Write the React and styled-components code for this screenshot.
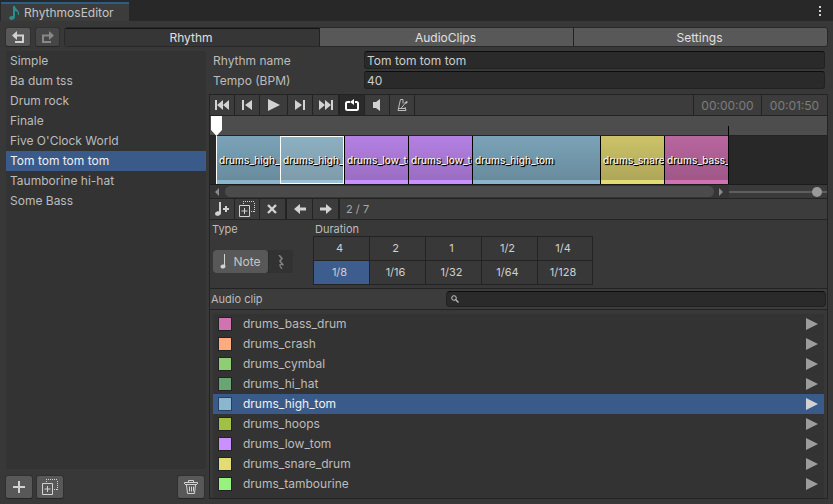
import React, { useState } from "react";
import styled, { createGlobalStyle, css } from "styled-components";

const color = {
  window: "#383838",
  strip: "#282828",
  line: "#232323",
  list: "#333333",
  toolbar: "#3c3c3c",
  button: "#585858",
  field: "#2a2a2a",
  select: "#3a5b8a",
  text: "#c4c4c4",
  icon: "#d2d2d2",
};

const GlobalStyle = createGlobalStyle`
  *, *::before, *::after { box-sizing: border-box; }
  body {
    margin: 0;
    background: ${color.window};
    color: ${color.text};
    font-family: Inter, "Liberation Sans", sans-serif;
    font-size: 12px;
  }
  button, input { font: inherit; color: inherit; margin: 0; }
  button { padding: 0; border: 0; background: none; }
  ul { list-style: none; margin: 0; padding: 0; }
  svg { display: block; flex: none; }
`;

const Window = styled.div`
  min-height: 100vh;
  display: flex;
  flex-direction: column;
  background: ${color.window};
`;

const TitleBar = styled.header`
  display: flex;
  justify-content: space-between;
  height: 21px;
  padding-left: 1px;
  background: ${color.strip};
`;

const WindowTab = styled.h1`
  display: flex;
  align-items: center;
  gap: 3px;
  width: 128px;
  margin: 2px 0 0;
  padding-left: 8px;
  border-top: 2px solid #2c5d87;
  background: #3c3c3c;
  font-size: 12px;
  font-weight: 400;
  line-height: 16px;
`;

const MenuButton = styled.button`
  display: grid;
  place-items: center;
  width: 12px;
  margin-right: 7px;
`;

const ModeBar = styled.nav`
  display: flex;
  gap: 4px;
  padding: 6px 5px 4px;
`;

const RaisedButton = styled.button`
  display: grid;
  place-items: center;
  width: ${(p) => p.$width}px;
  height: ${(p) => p.$height}px;
  border: 1px solid #303030;
  border-bottom-color: #242424;
  border-radius: 3px;
  background: ${color.button};
  &:disabled { background: #464646; }
`;

const Segments = styled.div`
  flex: 1;
  display: grid;
  grid-template-columns: repeat(3, 1fr);
  height: 20px;
  border: 1px solid #282828;
  border-radius: 3px;
  overflow: hidden;
`;

const Segment = styled.button`
  padding-right: 2px;
  color: #e0e0e0;
  background: ${(p) => (p.$active ? "#363636" : color.button)};
  box-shadow: ${(p) => (p.$active ? "inset 0 1px 0 #151515" : "none")};
  & + & { border-left: 1px solid #222; }
`;

const Workspace = styled.div`
  flex: 1;
  display: grid;
  grid-template-columns: 200px minmax(0, 1fr);
  gap: 3px;
  padding: 0 5px 5px 6px;
`;

const Sidebar = styled.aside`
  display: flex;
  flex-direction: column;
  gap: 6px;
`;

const RhythmList = styled.ul`
  flex: 1;
  background: ${color.list};
`;

const RhythmItem = styled.button`
  display: block;
  width: 100%;
  height: 20px;
  padding: 0 0 2px 4px;
  text-align: left;
  color: ${(p) => (p.$active ? "#f0f0f0" : "#bcbcbc")};
  background: ${(p) => (p.$active ? color.select : "transparent")};
`;

const SidebarActions = styled.div`
  display: flex;
  gap: 3px;
  margin: 0 1px 0 -1px;
`;

const Spacer = styled.span`
  flex: 1;
`;

const Main = styled.main`
  display: flex;
  flex-direction: column;
  min-width: 0;
`;

const Fields = styled.div`
  display: grid;
  gap: 2px;
  padding: 0 3px 5px 4px;
`;

const FieldRow = styled.div`
  display: grid;
  grid-template-columns: 151px minmax(0, 1fr);
  align-items: start;
  height: 18px;
`;

const FieldLabel = styled.label`
  color: #bcbcbc;
  line-height: 20px;
`;

const sunken = css`
  border: 1px solid #212121;
  border-top-color: #0d0d0d;
  border-radius: 3px;
  background: ${color.field};
`;

const TextField = styled.input`
  ${sunken}
  width: 100%;
  height: 18px;
  padding: 1px 2px 0;
  color: #cdcdcd;
`;

const Panel = styled.section`
  flex: 1;
  display: flex;
  flex-direction: column;
  border: 1px solid ${color.line};
`;

const Toolbar = styled.div`
  display: flex;
  height: 21px;
  border-bottom: 1px solid ${color.line};
  background: ${color.toolbar};
`;

const ToolButton = styled.button`
  display: grid;
  place-items: center;
  width: ${(p) => p.$width || 25}px;
  border-right: ${(p) => (p.$groupEnd ? 2 : 1)}px solid ${color.line};
  background: ${(p) => (p.$active ? "#2a2a2a" : "transparent")};
`;

const Clock = styled.output`
  width: ${(p) => p.$width}px;
  border-left: 1px solid ${color.line};
  color: #7d7d7d;
  line-height: 21px;
  text-align: center;
`;

const Position = styled.output`
  padding-left: 6px;
  font-size: 11px;
  line-height: 21px;
  color: #a8a8a8;
`;

const Timeline = styled.div`
  position: relative;
  border-bottom: 1px solid ${color.line};
  background: ${color.strip};
`;

const Ruler = styled.div`
  height: 20px;
  border-bottom: 1px solid ${color.line};
  background: #4d4d4d;
`;

const Track = styled.div`
  display: flex;
  height: 49px;
  padding-left: 6px;
  border-bottom: 1px solid #1c1c1c;
  overflow: hidden;
`;

const Clip = styled.button`
  flex: none;
  width: ${(p) => p.$beats * 64}px;
  height: 48px;
  padding-left: 2px;
  overflow: hidden;
  border-left: 1px solid ${(p) => (p.$first ? "#fff" : "#000")};
  background:
    linear-gradient(rgba(0, 0, 0, 0.11), rgba(0, 0, 0, 0.24)) 0 0 / 100% 44px no-repeat,
    ${(p) => p.$color};
  font-size: 10px;
  font-weight: 500;
  text-align: left;
  white-space: nowrap;
  color: #f2f2f2;
  text-shadow: 1px 1px 0 #000, 1px 1px 1px #000;
  ${(p) =>
    p.$selected &&
    css`
      border-left: 0;
      padding-left: 3px;
      outline: 1px solid #fff;
      outline-offset: -1px;
      background:
        linear-gradient(rgba(255, 255, 255, 0.14), rgba(255, 255, 255, 0.14)),
        linear-gradient(rgba(0, 0, 0, 0.11), rgba(0, 0, 0, 0.24)) 0 0 / 100% 44px no-repeat,
        ${p.$color};
    `}
`;

const EndMark = styled.span`
  position: absolute;
  left: 518px;
  top: 10px;
  width: 1px;
  height: 58px;
  background: #000;
`;

const Playhead = styled.svg`
  position: absolute;
  left: 1px;
  top: 0;
`;

const ScrollRow = styled.div`
  display: grid;
  grid-template-columns: minmax(0, 1fr) 98px;
  height: 13px;
  background: #3a3a3a;
`;

const ScrollBar = styled.div`
  display: flex;
  align-items: center;
  background: #353535;
`;

const ScrollArrow = styled.button`
  display: grid;
  place-items: center;
  width: 15px;
  height: 13px;
`;

const ScrollThumb = styled.div`
  flex: 1;
  height: 11px;
  border-radius: 6px;
  background: #4b4b4b;
`;

const ZoomSlider = styled.input`
  appearance: none;
  width: 100%;
  height: 13px;
  background: linear-gradient(#5e5e5e, #5e5e5e) 0 6px / 100% 2px no-repeat;
  &::-webkit-slider-thumb {
    appearance: none;
    width: 10px;
    height: 10px;
    margin-top: 1px;
    border-radius: 50%;
    background: #999;
  }
`;

const NoteSettings = styled.div`
  display: grid;
  grid-template-columns: 101px minmax(0, 1fr);
  height: 69px;
  padding: 1px 2px 0;
  border-bottom: 1px solid ${color.line};
`;

const Caption = styled.div`
  height: 15px;
  padding-left: ${(p) => p.$inset || 0}px;
  font-size: 11px;
  line-height: 16px;
  color: #bcbcbc;
`;

const TypeToggle = styled.div`
  display: inline-flex;
  width: 80px;
  height: 23px;
  margin: 14px 0 0 1px;
  border-radius: 3px;
  background: #323232;
  overflow: hidden;
`;

const TypeOption = styled.button`
  display: flex;
  align-items: center;
  justify-content: center;
  gap: 6px;
  width: ${(p) => (p.$active ? 55 : 25)}px;
  border-radius: 3px;
  background: ${(p) => (p.$active ? color.button : "transparent")};
  box-shadow: ${(p) => (p.$active ? "0 0 0 1px #2a2a2a" : "none")};
`;

const DurationGrid = styled.div`
  display: grid;
  grid-template-columns: repeat(4, 55px) 54px;
  grid-auto-rows: 23px;
  gap: 1px;
  width: max-content;
  border: 1px solid ${color.line};
  background: ${color.line};
`;

const DurationButton = styled.button`
  padding: 0 4px 2px 0;
  font-size: 11px;
  color: #d0d0d0;
  background: ${(p) => (p.$active ? "#3d5d8f" : color.window)};
`;

const SearchRow = styled.div`
  display: grid;
  grid-template-columns: 235px minmax(0, 1fr);
  align-items: center;
  height: 21px;
  padding: 0 1px;
  border-bottom: 1px solid ${color.line};
  background: ${color.toolbar};
`;

const SearchLabel = styled.label`
  font-size: 11px;
  color: #bcbcbc;
`;

const SearchBox = styled.div`
  ${sunken}
  display: flex;
  align-items: center;
  gap: 4px;
  height: 16px;
  padding-left: 4px;
  border-radius: 4px;
`;

const SearchInput = styled.input`
  flex: 1;
  min-width: 0;
  height: 14px;
  padding: 0;
  border: 0;
  outline: 0;
  background: transparent;
`;

const AudioList = styled.ul`
  flex: 1;
  margin: 4px 3px 0;
  background: ${color.list};
`;

const AudioRow = styled.li`
  display: flex;
  height: 20px;
  color: ${(p) => (p.$active ? "#f0f0f0" : "#bcbcbc")};
  background: ${(p) => (p.$active ? color.select : "transparent")};
`;

const AudioName = styled.button`
  flex: 1;
  display: flex;
  align-items: center;
  gap: 11px;
  padding-left: 5px;
  line-height: 20px;
  text-align: left;
`;

const Swatch = styled.span`
  width: 14px;
  height: 14px;
  border: 1px solid rgba(0, 0, 0, 0.3);
  background: ${(p) => p.$color};
  background-clip: padding-box;
`;

const PreviewButton = styled.button`
  display: grid;
  place-items: center;
  width: 25px;
  color: ${(p) => (p.$active ? "#d2d2d2" : "#9c9c9c")};
`;

const Icon = ({ w, h, children, fill = color.icon }) => (
  <svg width={w} height={h} viewBox={`0 0 ${w} ${h}`} fill={fill} aria-hidden="true">
    {children}
  </svg>
);

const TurnIcon = ({ flip, tint }) => (
  <Icon w={12} h={12} fill={tint}>
    <g transform={flip ? "matrix(-1 0 0 1 12 0)" : undefined}>
      <path d="M0 4.500 5 0v3.500h7V12H3v-2h7V5.500H5V9z" />
    </g>
  </Icon>
);

const DuplicateIcon = () => (
  <Icon w={16} h={16} fill="none">
    <path d="M.5 4.500h10v11H.5zM5.500 7v6M2.500 10h6" stroke={color.icon} />
    <path d="M4 .5h12M15.500 2v9M12 10.500h3M4.500 2v2" stroke={color.icon} strokeDasharray="1 1" />
  </Icon>
);

const transport = [
  ["To start", 25, <Icon w={14} h={10}><path d="M0 0h2v10H0zM8 0v10L2 5zM14 0v10L8 5z" /></Icon>],
  ["Previous note", 25, <Icon w={10} h={10}><path d="M0 0h2v10H0zM10 0v10L3 5z" /></Icon>],
  ["Play", 28, <Icon w={12} h={12}><path d="M0 0l12 6L0 12z" /></Icon>],
  ["Next note", 25, <Icon w={10} h={10}><path d="M8 0h2v10H8zM0 0v10l7-5z" /></Icon>],
  ["To end", 27, <Icon w={14} h={10}><path d="M12 0h2v10h-2zM6 0v10l6-5zM0 0v10l6-5z" /></Icon>],
];

const rhythms = [
  "Simple", "Ba dum tss", "Drum rock", "Finale", "Five O'Clock World",
  "Tom tom tom tom", "Taumborine hi-hat", "Some Bass",
];

const audioClips = {
  drums_bass_drum: "#d073b2",
  drums_crash: "#ffab7d",
  drums_cymbal: "#90cc74",
  drums_hi_hat: "#68a573",
  drums_high_tom: "#8ab7ce",
  drums_hoops: "#a0c143",
  drums_low_tom: "#ca90ff",
  drums_snare_drum: "#e5db75",
  drums_tambourine: "#96f27d",
};

const notes = [
  ["drums_high_tom", 1], ["drums_high_tom", 1], ["drums_low_tom", 1], ["drums_low_tom", 1],
  ["drums_high_tom", 2], ["drums_snare_drum", 1], ["drums_bass_drum", 1],
];

const durations = ["4", "2", "1", "1/2", "1/4", "1/8", "1/16", "1/32", "1/64", "1/128"];
const modes = ["Rhythm", "AudioClips", "Settings"];

export default function App() {
  const [mode, setMode] = useState("Rhythm");
  const [rhythm, setRhythm] = useState("Tom tom tom tom");
  const [note, setNote] = useState(1);
  const [duration, setDuration] = useState("1/8");
  const [clip, setClip] = useState("drums_high_tom");
  const [query, setQuery] = useState("");

  return (
    <Window>
      <GlobalStyle />
      <TitleBar>
        <WindowTab>
          <Icon w={12} h={14} fill="#2a8f8f">
            <path d="M4 0h2c0 3 5 4 4 9H9c0-3-1-4-3-4v6c0 2-2 3-4 3-3-1-2-4 1-4h1z" />
          </Icon>
          RhythmosEditor
        </WindowTab>
        <MenuButton aria-label="Window menu">
          <Icon w={2} h={10}><path d="M0 0h2v2H0zM0 4h2v2H0zM0 8h2v2H0z" /></Icon>
        </MenuButton>
      </TitleBar>

      <ModeBar>
        <RaisedButton $width={26} $height={20} aria-label="Undo"><TurnIcon tint={color.icon} /></RaisedButton>
        <RaisedButton $width={25} $height={20} aria-label="Redo" disabled><TurnIcon flip tint="#888" /></RaisedButton>
        <Segments>
          {modes.map((m) => (
            <Segment key={m} $active={m === mode} aria-pressed={m === mode} onClick={() => setMode(m)}>{m}</Segment>
          ))}
        </Segments>
      </ModeBar>

      <Workspace>
        <Sidebar>
          <RhythmList>
            {rhythms.map((r) => (
              <li key={r}>
                <RhythmItem $active={r === rhythm} onClick={() => setRhythm(r)}>{r}</RhythmItem>
              </li>
            ))}
          </RhythmList>
          <SidebarActions>
            <RaisedButton $width={28} $height={24} aria-label="Add rhythm">
              <Icon w={12} h={12}><path d="M5 0h2v5h5v2H7v5H5V7H0V5h5z" /></Icon>
            </RaisedButton>
            <RaisedButton $width={28} $height={24} aria-label="Duplicate rhythm"><DuplicateIcon /></RaisedButton>
            <Spacer />
            <RaisedButton $width={28} $height={24} aria-label="Delete rhythm">
              <Icon w={14} h={14} fill="none">
                <path d="M4.500 2V.5h5V2M.5 4V2.500h13V4M1 4.500h12M2.500 5l1 8.500h7l1-8.500M5.500 6.500v5M7.500 6.500v5M9.500 6.500v5" stroke={color.icon} />
              </Icon>
            </RaisedButton>
          </SidebarActions>
        </Sidebar>

        <Main>
          <Fields>
            <FieldRow>
              <FieldLabel htmlFor="name">Rhythm name</FieldLabel>
              <TextField id="name" defaultValue="Tom tom tom tom" />
            </FieldRow>
            <FieldRow>
              <FieldLabel htmlFor="tempo">Tempo (BPM)</FieldLabel>
              <TextField id="tempo" inputMode="numeric" defaultValue="40" />
            </FieldRow>
          </Fields>

          <Panel>
            <Toolbar>
              {transport.map(([label, width, icon], i) => (
                <ToolButton key={label} $width={width} $groupEnd={i === 4} aria-label={label}>{icon}</ToolButton>
              ))}
              <ToolButton $active aria-label="Loop" aria-pressed="true">
                <Icon w={14} h={12} fill="none">
                  <path d="M5 3H2.500Q1 3 1 4.500v5Q1 11 2.500 11h9q1.500 0 1.500-1.500v-5Q13 3 11.500 3H10" stroke="#fff" strokeWidth="2" />
                  <path d="M9 0v6L5 3z" fill="#fff" />
                </Icon>
              </ToolButton>
              <ToolButton aria-label="Mute">
                <Icon w={8} h={12}><path d="M0 3h3l4-3v12L3 9H0z" /></Icon>
              </ToolButton>
              <ToolButton aria-label="Metronome">
                <Icon w={11} h={12} fill="none">
                  <path d="M6 4.500V.5H3.500L1 11.500h8L8 8M2 9.500h6M4 9.500L9 3" stroke="#bdbdbd" />
                  <path d="M7.500 3.500l2-1.500 1.500 1-2 2z" fill="#bdbdbd" />
                </Icon>
              </ToolButton>
              <Spacer />
              <Clock $width={68}>00:00:00</Clock>
              <Clock $width={66}>00:01:50</Clock>
            </Toolbar>

            <Timeline>
              <Ruler />
              <Track>
                {notes.map(([name, beats], i) => (
                  <Clip
                    key={i}
                    $beats={beats}
                    $color={audioClips[name]}
                    $selected={i === note}
                    $first={i === 0}
                    onClick={() => setNote(i)}
                  >
                    {name}
                  </Clip>
                ))}
              </Track>
              <ScrollRow>
                <ScrollBar>
                  <ScrollArrow aria-label="Scroll left">
                    <Icon w={5} h={8} fill="#8a8a8a"><path d="M4 0v8L0 4z" /></Icon>
                  </ScrollArrow>
                  <ScrollThumb />
                  <ScrollArrow aria-label="Scroll right">
                    <Icon w={5} h={8} fill="#8a8a8a"><path d="M0 0v8l4-4z" /></Icon>
                  </ScrollArrow>
                </ScrollBar>
                <ZoomSlider type="range" min="0" max="100" defaultValue="94" aria-label="Timeline zoom" />
              </ScrollRow>
              <EndMark />
              <Playhead width="11" height="20" viewBox="0 0 11 20" fill="#fff" aria-hidden="true">
                <path d="M0 0h11v14l-5.500 6L0 14z" />
              </Playhead>
            </Timeline>

            <Toolbar>
              <ToolButton aria-label="Add note">
                <Icon w={15} h={14}>
                  <path d="M4 0h2v11H4z" />
                  <ellipse cx="3" cy="11.500" rx="3" ry="2.200" transform="rotate(-15 3 11.500)" />
                  <path d="M10 4h2v2h2v2h-2v2h-2V8H8V6h2z" />
                </Icon>
              </ToolButton>
              <ToolButton aria-label="Duplicate note"><DuplicateIcon /></ToolButton>
              <ToolButton $width={27} $groupEnd aria-label="Delete note">
                <Icon w={11} h={10} fill="none"><path d="M1 1l8 8M9 1L1 9" stroke={color.icon} strokeWidth="2.400" /></Icon>
              </ToolButton>
              <ToolButton $width={26} aria-label="Move left">
                <Icon w={12} h={10}><path d="M0 5l6-5v3.500h6v3H6V10z" /></Icon>
              </ToolButton>
              <ToolButton $width={27} $groupEnd aria-label="Move right">
                <Icon w={12} h={10}><path d="M12 5L6 0v3.500H0v3h6V10z" /></Icon>
              </ToolButton>
              <Position>{note + 1} / {notes.length}</Position>
            </Toolbar>

            <NoteSettings>
              <div>
                <Caption>Type</Caption>
                <TypeToggle>
                  <TypeOption $active aria-pressed="true">
                    <Icon w={7} h={15}>
                      <path d="M4 0h1v12H4z" />
                      <ellipse cx="3" cy="12.500" rx="2.500" ry="2" transform="rotate(-15 3 12.500)" />
                    </Icon>
                    Note
                  </TypeOption>
                  <TypeOption aria-label="Rest" aria-pressed="false">
                    <Icon w={6} h={14} fill="none">
                      <path d="M1 0L4 3.500 2 6l3 4" stroke="#808080" strokeWidth="1.600" />
                      <path d="M5.500 10Q-1 7.500 4 14" stroke="#808080" strokeWidth="1.200" />
                    </Icon>
                  </TypeOption>
                </TypeToggle>
              </div>
              <div>
                <Caption $inset={2}>Duration</Caption>
                <DurationGrid>
                  {durations.map((d) => (
                    <DurationButton key={d} $active={d === duration} aria-pressed={d === duration} onClick={() => setDuration(d)}>
                      {d}
                    </DurationButton>
                  ))}
                </DurationGrid>
              </div>
            </NoteSettings>

            <SearchRow>
              <SearchLabel htmlFor="search">Audio clip</SearchLabel>
              <SearchBox>
                <Icon w={8} h={8} fill="none">
                  <circle cx="3" cy="3" r="2.300" stroke={color.text} />
                  <path d="M4.500 4.500L7.500 7.500" stroke={color.text} strokeWidth="1.300" />
                </Icon>
                <SearchInput id="search" value={query} onChange={(e) => setQuery(e.target.value)} />
              </SearchBox>
            </SearchRow>

            <AudioList>
              {Object.entries(audioClips)
                .filter(([name]) => name.includes(query))
                .map(([name, tint]) => (
                  <AudioRow key={name} $active={name === clip}>
                    <AudioName onClick={() => setClip(name)}>
                      <Swatch $color={tint} />
                      {name}
                    </AudioName>
                    <PreviewButton $active={name === clip} aria-label={`Play ${name}`}>
                      <Icon w={12} h={12} fill="currentColor"><path d="M0 0l12 6L0 12z" /></Icon>
                    </PreviewButton>
                  </AudioRow>
                ))}
            </AudioList>
          </Panel>
        </Main>
      </Workspace>
    </Window>
  );
}
